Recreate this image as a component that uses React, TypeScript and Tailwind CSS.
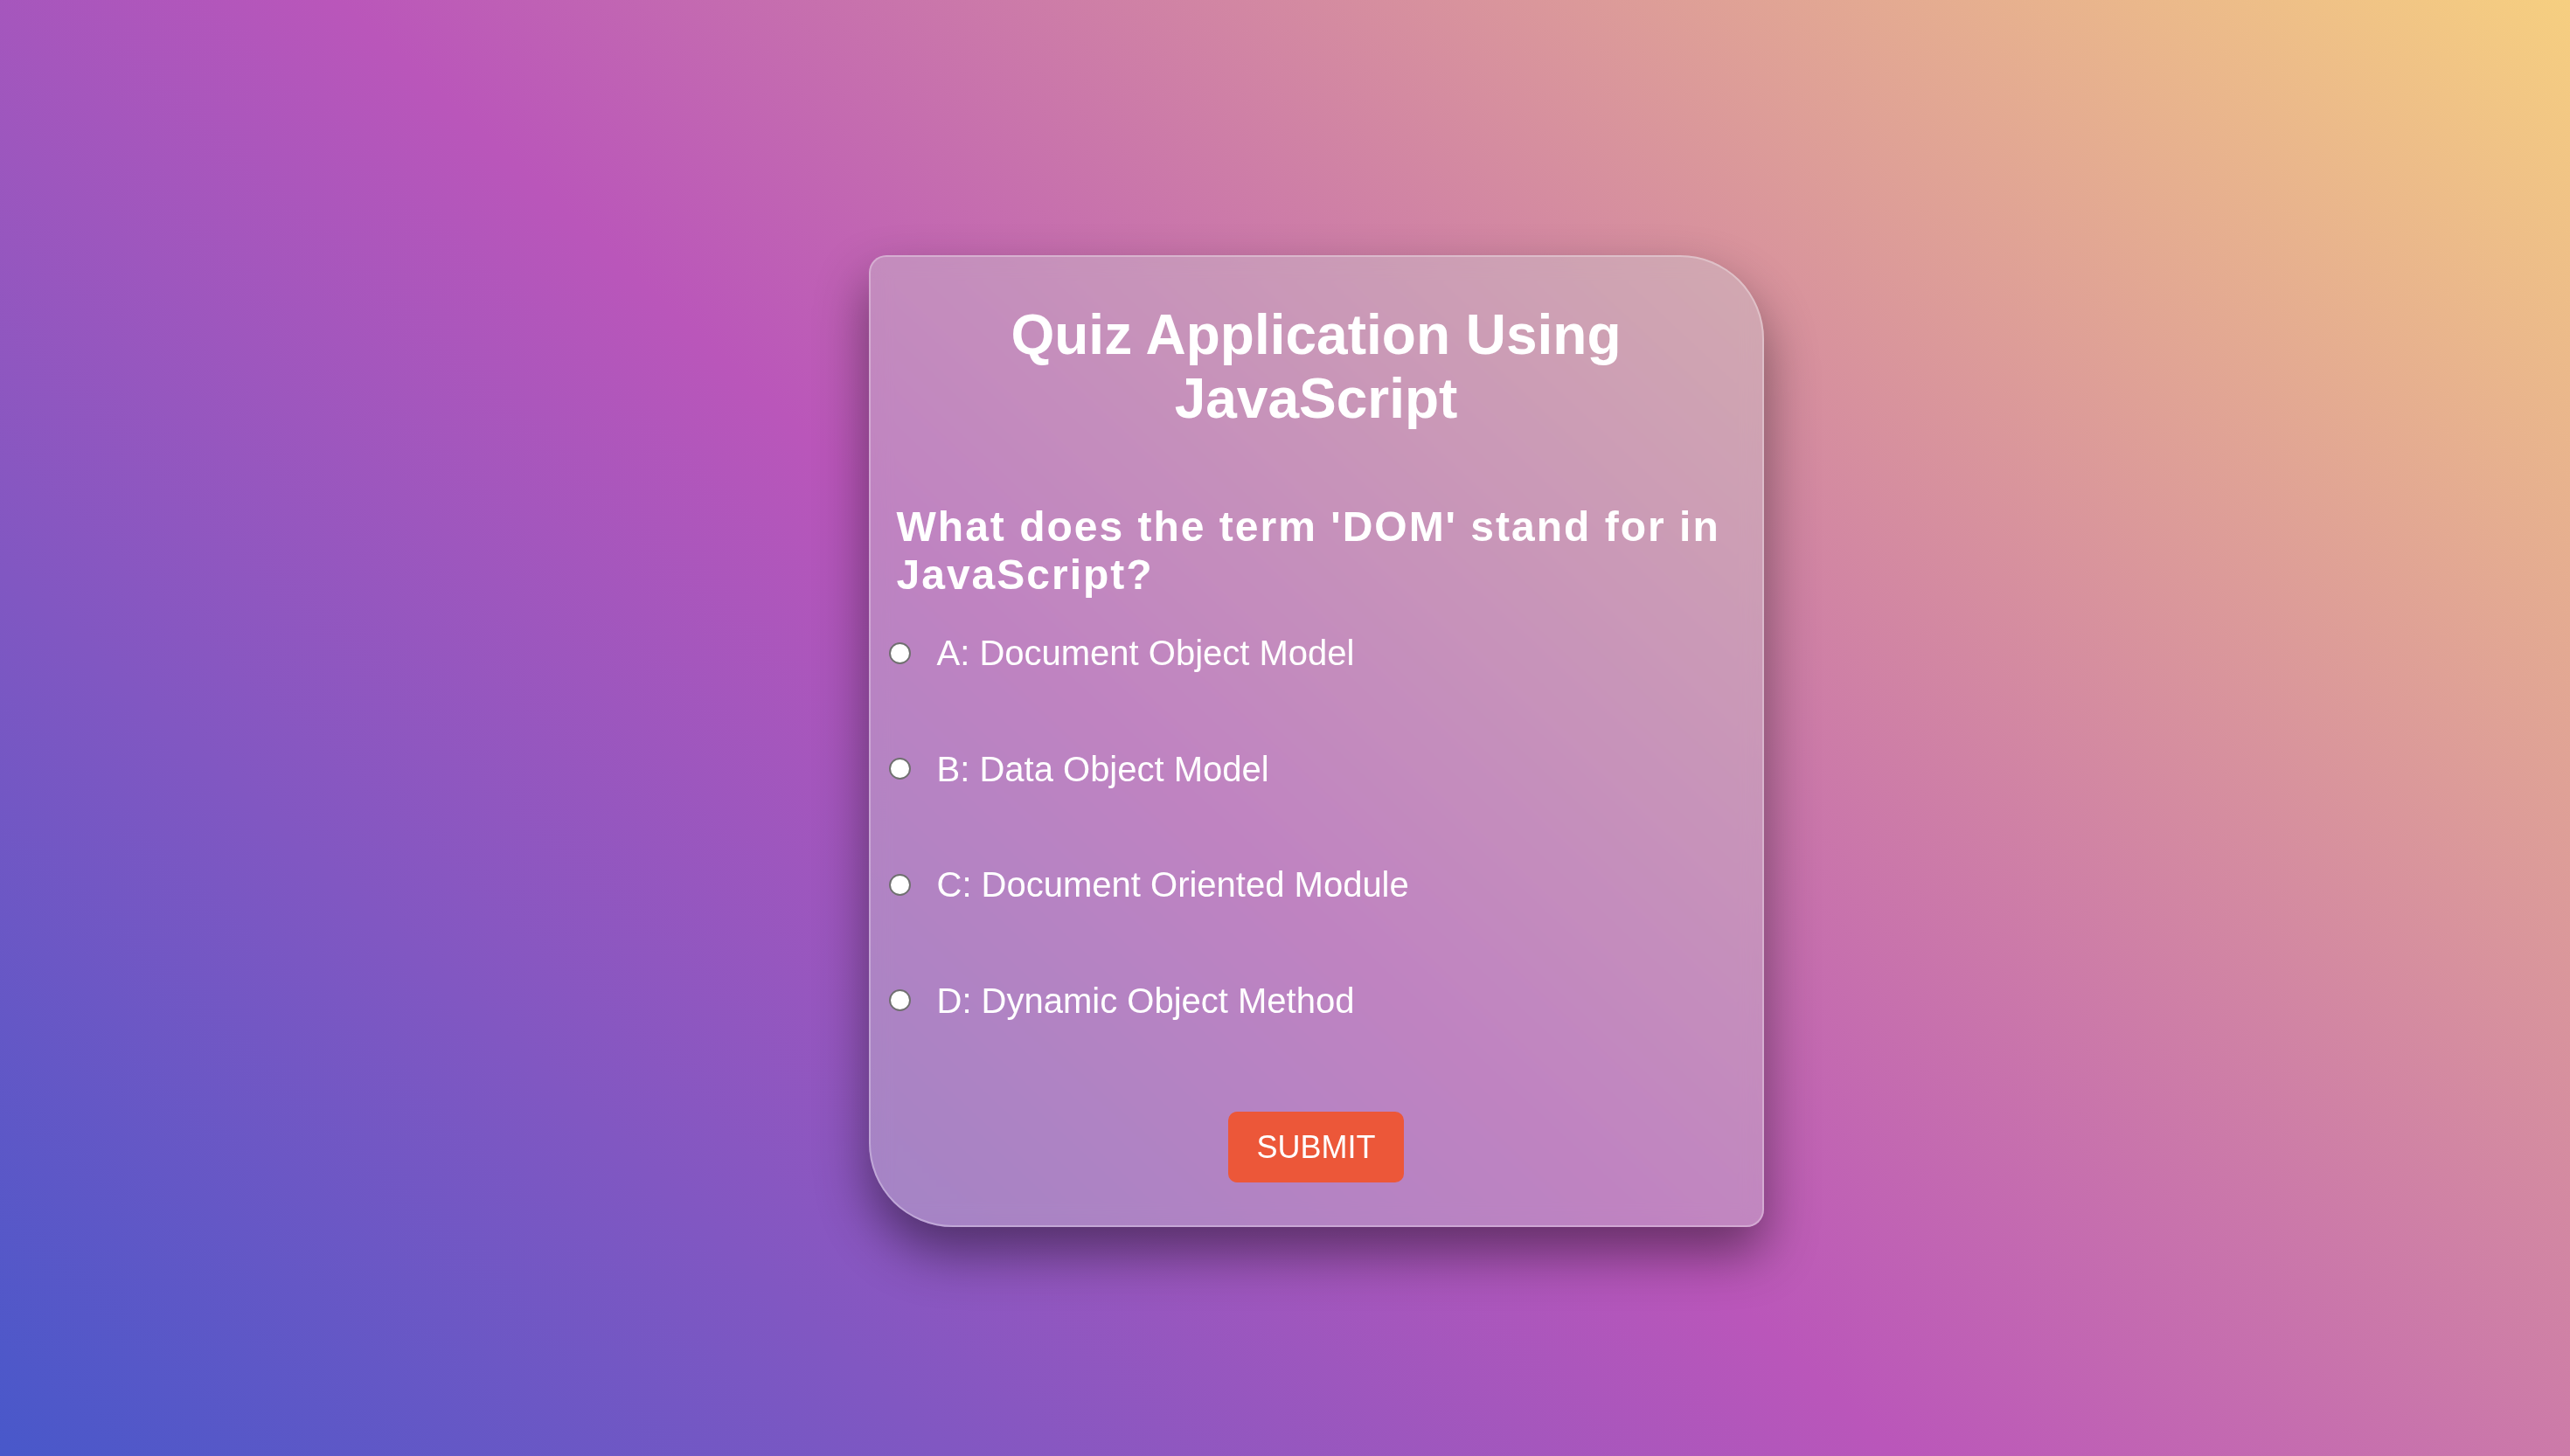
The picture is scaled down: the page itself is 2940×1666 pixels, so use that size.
const options = [
  "A: Document Object Model",
  "B: Data Object Model",
  "C: Document Oriented Module",
  "D: Dynamic Object Method",
];

export default function App() {
  return (
    <div className="min-h-screen w-full flex items-center justify-center pl-[71px] pt-[30px] bg-[linear-gradient(43deg,#4858CA_0%,#BA56BA_46%,#F6CF80_100%)] font-['Liberation_Sans',Arial,sans-serif] text-white">
      <div className="w-[1024px] flex flex-col border-2 border-white/30 bg-[rgba(200,200,205,0.4)] backdrop-blur-md rounded-[20px_96px_20px_96px] shadow-[0_30px_60px_rgba(0,0,0,0.45)] pt-[53px] pb-[49px]">
        <h1 className="text-[64px] font-bold text-center leading-[1.15] px-[30px]">
          Quiz Application Using JavaScript
        </h1>
        <h2 className="mt-[81px] px-[30px] text-[48px] font-bold leading-[1.15] tracking-[2px]">
          What does the term 'DOM' stand for in JavaScript?
        </h2>
        <div className="flex flex-col pl-[21px] -mt-[4px]">
          {options.map((opt) => (
            <label key={opt} className="h-[132.5px] flex items-center gap-[30px] text-[40px] leading-[1.15]">
              <span className="w-[25px] h-[25px] shrink-0 rounded-full bg-white border-2 border-[#707070]" />
              <span>{opt}</span>
            </label>
          ))}
        </div>
        <div className="flex justify-center mt-[61px]">
          <button className="bg-[#ec5739] text-white text-[36px] leading-[1.15] px-[32px] py-[20px] rounded-[10px]">
            SUBMIT
          </button>
        </div>
      </div>
    </div>
  );
}
